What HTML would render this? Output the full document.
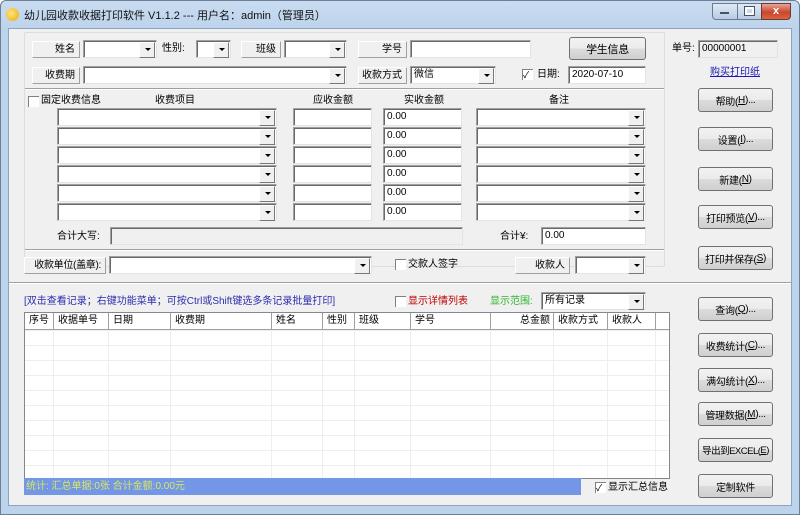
<!DOCTYPE html>
<html><head><meta charset="utf-8"><style>
*{box-sizing:border-box;margin:0;padding:0}
body{width:800px;height:515px;overflow:hidden;background:#fff;font-family:"Liberation Sans","Noto Sans CJK SC",sans-serif;font-size:11px;color:#000;position:relative}
.a{position:absolute}
.win{left:0;top:0;width:800px;height:515px;background:linear-gradient(#c9dcf0,#bcd3ec 30px,#bcd3ec);border:1px solid #6d7f96;border-radius:6px 6px 0 0}
.client{left:8px;top:28px;width:784px;height:478px;background:#f0f0f0;border:1px solid #8ea4bf}
.title{left:24px;top:7px;font-size:11px;color:#111;white-space:nowrap}
.btn{position:absolute;border:1px solid #707070;border-radius:3px;background:linear-gradient(#f2f2f2,#ebebeb 50%,#dcdcdc 51%,#cfcfcf);text-align:center;font-size:10px;display:flex;align-items:center;justify-content:center;white-space:nowrap;letter-spacing:-0.3px}
.fb{position:absolute;background:#f0f0f0;border-right:1px solid #a0a0a0;border-bottom:1px solid #a0a0a0;border-top:1px solid #fff;border-left:1px solid #fff;text-align:right;padding-right:4px;font-size:10px;line-height:15px;white-space:nowrap;overflow:hidden}
.in,.cb{position:absolute;background:#fff;border:1px solid #a0a0a0;border-right-color:#e3e3e3;border-bottom-color:#e3e3e3;box-shadow:inset 1px 1px 0 #696969;font-size:10px;line-height:14px;padding-top:1px;padding-left:3px;height:18px;white-space:nowrap}
.cb::after{content:"";position:absolute;right:1px;top:1px;width:14px;height:14px;background:#f0f0f0;border:1px solid #fff;border-right-color:#777;border-bottom-color:#777}
.cb::before{content:"";position:absolute;right:5px;top:7px;border-left:3px solid transparent;border-right:3px solid transparent;border-top:3px solid #000;z-index:2}
.t{position:absolute;font-size:10px;white-space:nowrap;line-height:12px}
.chk{position:absolute;width:11px;height:11px;border-left:1px solid #808080;border-top:1px solid #808080;background:#fff;font-size:9px;line-height:10px}
.grp{position:absolute;border:1px solid #d5dfe5;border-radius:2px}
.hl{position:absolute;height:2px;border-top:1px solid #a0a0a0;border-bottom:1px solid #fff}
.th{position:absolute;top:0;height:16px;border-right:1px solid #a0a0a0;font-size:10px;line-height:16px;padding-left:4px;white-space:nowrap}
</style></head><body>
<div class="a win"></div>
<div class="a" style="left:6px;top:8px;width:13px;height:13px;border-radius:50%;background:radial-gradient(circle at 40% 40%,#ffe680,#f0a800)"></div>
<div class="a title">幼儿园收款收据打印软件 V1.1.2 --- 用户名：admin（管理员）</div>
<div class="a" style="left:712px;top:3px;width:26px;height:17px;border:1px solid #6b7c91;border-radius:0 0 0 4px;background:linear-gradient(#dfe9f5,#b9cbe1)"></div>
<div class="a" style="left:720px;top:12px;width:9px;height:2px;background:#fff;border:1px solid #44536a"></div>
<div class="a" style="left:737px;top:3px;width:25px;height:17px;border:1px solid #6b7c91;background:linear-gradient(#dfe9f5,#b9cbe1)"></div>
<div class="a" style="left:745px;top:7px;width:9px;height:8px;border:2px solid #fff;outline:1px solid #44536a"></div>
<div class="a" style="left:761px;top:3px;width:30px;height:17px;border:1px solid #6b3b33;border-radius:0 0 4px 0;background:linear-gradient(#e8a496,#c9462f 55%,#d9643f);color:#fff;font-weight:bold;text-align:center;font-size:11px;line-height:15px">x</div>
<div class="a client"></div>

<div class="grp" style="left:24px;top:32px;width:641px;height:235px"></div>
<div class="hl" style="left:25px;top:88px;width:639px"></div>
<div class="hl" style="left:25px;top:249px;width:639px"></div>

<div class="fb" style="left:32px;top:41px;width:48px;height:17px">姓名</div>
<div class="cb" style="left:83px;top:40px;width:74px"></div>
<div class="t" style="left:162px;top:43px">性别:</div>
<div class="cb" style="left:196px;top:40px;width:35px"></div>
<div class="fb" style="left:241px;top:41px;width:40px;height:17px">班级</div>
<div class="cb" style="left:284px;top:40px;width:63px"></div>
<div class="fb" style="left:358px;top:41px;width:49px;height:17px">学号</div>
<div class="in" style="left:410px;top:40px;width:121px"></div>
<div class="btn" style="left:569px;top:37px;width:77px;height:23px;font-size:11px">学生信息</div>

<div class="fb" style="left:32px;top:67px;width:48px;height:17px">收费期</div>
<div class="cb" style="left:83px;top:66px;width:264px"></div>
<div class="fb" style="left:358px;top:67px;width:49px;height:17px">收款方式</div>
<div class="cb" style="left:410px;top:66px;width:86px">微信</div>
<div class="chk" style="left:522px;top:69px">✓</div>
<div class="t" style="left:537px;top:69px">日期:</div>
<div class="in" style="left:568px;top:66px;width:78px">2020-07-10</div>

<div class="chk" style="left:28px;top:96px"></div>
<div class="t" style="left:41px;top:95px">固定收费信息</div>
<div class="t" style="left:155px;top:95px">收费项目</div>
<div class="t" style="left:313px;top:95px">应收金额</div>
<div class="t" style="left:404px;top:95px">实收金额</div>
<div class="t" style="left:549px;top:95px">备注</div>

<div class="cb" style="left:57px;top:108px;width:220px"></div><div class="in" style="left:293px;top:108px;width:79px"></div><div class="in" style="left:383px;top:108px;width:79px">0.00</div><div class="cb" style="left:476px;top:108px;width:170px"></div>
<div class="cb" style="left:57px;top:127px;width:220px"></div><div class="in" style="left:293px;top:127px;width:79px"></div><div class="in" style="left:383px;top:127px;width:79px">0.00</div><div class="cb" style="left:476px;top:127px;width:170px"></div>
<div class="cb" style="left:57px;top:146px;width:220px"></div><div class="in" style="left:293px;top:146px;width:79px"></div><div class="in" style="left:383px;top:146px;width:79px">0.00</div><div class="cb" style="left:476px;top:146px;width:170px"></div>
<div class="cb" style="left:57px;top:165px;width:220px"></div><div class="in" style="left:293px;top:165px;width:79px"></div><div class="in" style="left:383px;top:165px;width:79px">0.00</div><div class="cb" style="left:476px;top:165px;width:170px"></div>
<div class="cb" style="left:57px;top:184px;width:220px"></div><div class="in" style="left:293px;top:184px;width:79px"></div><div class="in" style="left:383px;top:184px;width:79px">0.00</div><div class="cb" style="left:476px;top:184px;width:170px"></div>
<div class="cb" style="left:57px;top:203px;width:220px"></div><div class="in" style="left:293px;top:203px;width:79px"></div><div class="in" style="left:383px;top:203px;width:79px">0.00</div><div class="cb" style="left:476px;top:203px;width:170px"></div>

<div class="t" style="left:57px;top:231px">合计大写:</div>
<div class="in" style="left:110px;top:227px;width:353px;background:#f0f0f0"></div>
<div class="t" style="left:500px;top:231px">合计¥:</div>
<div class="in" style="left:541px;top:227px;width:105px">0.00</div>

<div class="fb" style="left:24px;top:257px;width:82px;height:17px;letter-spacing:-0.3px">收款单位(盖章):</div>
<div class="cb" style="left:109px;top:256px;width:263px"></div>
<div class="chk" style="left:395px;top:259px"></div>
<div class="t" style="left:408px;top:259px">交款人签字</div>
<div class="fb" style="left:515px;top:257px;width:55px;height:17px">收款人</div>
<div class="cb" style="left:575px;top:256px;width:71px"></div>

<div class="t" style="left:672px;top:43px">单号:</div>
<div class="in" style="left:698px;top:40px;width:80px;background:#f0f0f0">00000001</div>
<div class="t" style="left:710px;top:67px;color:#1a1ab0;text-decoration:underline">购买打印纸</div>
<div class="btn" style="left:698px;top:88px;width:75px;height:24px">帮助(<u>H</u>)...</div>
<div class="btn" style="left:698px;top:127px;width:75px;height:24px">设置(<u>I</u>)...</div>
<div class="btn" style="left:698px;top:167px;width:75px;height:24px">新建(<u>N</u>)</div>
<div class="btn" style="left:698px;top:205px;width:75px;height:24px">打印预览(<u>V</u>)...</div>
<div class="btn" style="left:698px;top:246px;width:75px;height:24px">打印并保存(<u>S</u>)</div>

<div class="hl" style="left:9px;top:282px;width:782px"></div>

<div class="t" style="left:24px;top:296px;color:#2b2bb0">[双击查看记录；右键功能菜单；可按Ctrl或Shift键选多条记录批量打印]</div>
<div class="chk" style="left:395px;top:296px"></div>
<div class="t" style="left:408px;top:296px;color:#c00000">显示详情列表</div>
<div class="t" style="left:490px;top:296px;color:#2fb52f">显示范围:</div>
<div class="cb" style="left:541px;top:292px;width:105px">所有记录</div>

<div class="a" style="left:24px;top:312px;width:646px;height:167px;border:1px solid #828790;background:#fff;overflow:hidden;
background-image:linear-gradient(#eeeeee 1px,transparent 1px);background-size:100% 15px;background-position:0 2px">
<div class="a" style="left:0;top:0;width:646px;height:17px;background:#fff;border-bottom:1px solid #a0a0a0"></div>
<div class="th" style="left:0;width:29px">序号</div>
<div class="th" style="left:29px;width:55px">收据单号</div>
<div class="th" style="left:84px;width:62px">日期</div>
<div class="th" style="left:146px;width:101px">收费期</div>
<div class="th" style="left:247px;width:51px">姓名</div>
<div class="th" style="left:298px;width:32px">性别</div>
<div class="th" style="left:330px;width:56px">班级</div>
<div class="th" style="left:386px;width:80px">学号</div>
<div class="th" style="left:466px;width:63px;text-align:right;padding-right:3px">总金额</div>
<div class="th" style="left:529px;width:54px">收款方式</div>
<div class="th" style="left:583px;width:48px">收款人</div>
<div class="a" style="top:17px;left:28px;width:1px;height:150px;background:#eee"></div>
<div class="a" style="top:17px;left:83px;width:1px;height:150px;background:#eee"></div>
<div class="a" style="top:17px;left:145px;width:1px;height:150px;background:#eee"></div>
<div class="a" style="top:17px;left:246px;width:1px;height:150px;background:#eee"></div>
<div class="a" style="top:17px;left:297px;width:1px;height:150px;background:#eee"></div>
<div class="a" style="top:17px;left:329px;width:1px;height:150px;background:#eee"></div>
<div class="a" style="top:17px;left:385px;width:1px;height:150px;background:#eee"></div>
<div class="a" style="top:17px;left:465px;width:1px;height:150px;background:#eee"></div>
<div class="a" style="top:17px;left:528px;width:1px;height:150px;background:#eee"></div>
<div class="a" style="top:17px;left:582px;width:1px;height:150px;background:#eee"></div>
<div class="a" style="top:17px;left:630px;width:1px;height:150px;background:#eee"></div>
</div>

<div class="a" style="left:24px;top:478px;width:557px;height:17px;background:#7396e6;color:#d8e860;font-size:10px;line-height:17px;padding-left:2px;white-space:nowrap">统计: 汇总单据:0张 合计金额:0.00元</div>
<div class="chk" style="left:595px;top:482px">✓</div>
<div class="t" style="left:608px;top:482px">显示汇总信息</div>

<div class="btn" style="left:698px;top:297px;width:75px;height:24px">查询(<u>Q</u>)...</div>
<div class="btn" style="left:698px;top:333px;width:75px;height:24px">收费统计(<u>C</u>)...</div>
<div class="btn" style="left:698px;top:368px;width:75px;height:24px">满勾统计(<u>X</u>)...</div>
<div class="btn" style="left:698px;top:402px;width:75px;height:24px">管理数据(<u>M</u>)...</div>
<div class="btn" style="left:698px;top:438px;width:75px;height:24px;font-size:9.5px;letter-spacing:-0.5px">导出到EXCEL(<u>E</u>)</div>
<div class="btn" style="left:698px;top:474px;width:75px;height:24px">定制软件</div>
</body></html>
